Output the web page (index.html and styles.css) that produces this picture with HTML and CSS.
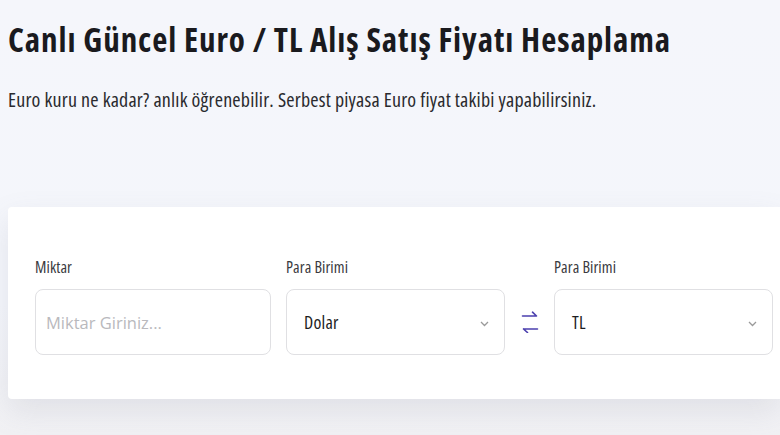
FILE: index.html
```html
<!DOCTYPE html>
<html lang="tr">
<head>
<meta charset="utf-8">
<title>Euro / TL Hesaplama</title>
<link rel="stylesheet" href="styles.css">
</head>
<body>
<main class="page">
  <header class="intro">
    <h1 class="title">Canlı Güncel Euro / TL Alış Satış Fiyatı Hesaplama</h1>
    <p class="lead">Euro kuru ne kadar? anlık öğrenebilir. Serbest piyasa Euro fiyat takibi yapabilirsiniz.</p>
  </header>
  <section class="card">
    <div class="field field-amount">
      <label class="label">Miktar</label>
      <div class="box"><span class="placeholder">Miktar Giriniz...</span></div>
    </div>
    <div class="field field-cur">
      <label class="label">Para Birimi</label>
      <div class="box select"><span class="value">Dolar</span>
        <svg class="chev" width="9" height="6" viewBox="0 0 9 6"><path d="M1 1l3.5 3.5L8 1" fill="none" stroke="#9a9a9a" stroke-width="1.3"/></svg>
      </div>
    </div>
    <div class="swap">
      <svg width="18" height="22" viewBox="0 0 18 22"><g fill="none" stroke="#4b3fae" stroke-width="1.6" stroke-linecap="round" stroke-linejoin="round"><path d="M1.5 5h14M11.5 1.2l4 3.8"/><path d="M16.5 18h-14M6.5 21.5l-4-3.5"/></g></svg>
    </div>
    <div class="field field-cur">
      <label class="label">Para Birimi</label>
      <div class="box select"><span class="value">TL</span>
        <svg class="chev" width="9" height="6" viewBox="0 0 9 6"><path d="M1 1l3.5 3.5L8 1" fill="none" stroke="#9a9a9a" stroke-width="1.3"/></svg>
      </div>
    </div>
  </section>
</main>
</body>
</html>
```
FILE: styles.css
```css
html, body {
  margin: 0;
  padding: 0;
}
body {
  width: 780px;
  height: 435px;
  overflow: hidden;
  font-family: "Open Sans", "Liberation Sans", sans-serif;
  background: linear-gradient(180deg, #f5f6fb 0%, #f4f6fb 70%, #f1f1f4 100%);
  color: #1b1b1f;
}
.page {
  padding: 0 0 0 8px;
}
.intro {
  padding-top: 20px;
}
.title {
  margin: 0;
  font-size: 33px;
  line-height: 40px;
  font-weight: 700;
  font-stretch: 75%;
  letter-spacing: 0.93px;
  color: #1a1a1e;
  white-space: nowrap;
}
.lead {
  margin: 28px 0 0;
  font-size: 20px;
  line-height: 24px;
  font-weight: 400;
  font-stretch: 75%;
  letter-spacing: 0.2px;
  color: #2a2a2e;
  white-space: nowrap;
}
.card {
  margin-top: 95px;
  background: #fff;
  height: 192px;
  box-sizing: border-box;
  padding: 50px 0 0 27px;
  display: flex;
  align-items: flex-start;
  box-shadow: 0 12px 30px rgba(120, 120, 140, 0.15);
  border-radius: 4px 0 0 4px;
}
.field {
  display: flex;
  flex-direction: column;
}
.field-amount { width: 236px; margin-right: 15px; }
.field-cur { width: 219px; }
.label {
  font-size: 16px;
  line-height: 20px;
  font-stretch: 75%;
  letter-spacing: 0.1px;
  color: #3a3a3e;
  margin-bottom: 12px;
}
.box {
  height: 66px;
  box-sizing: border-box;
  border: 1px solid #e0e0e3;
  border-radius: 8px;
  display: flex;
  align-items: center;
  padding: 0 15px 0 10px;
  background: #fff;
}
.select {
  padding-left: 17px;
  justify-content: space-between;
}
.placeholder {
  font-size: 16.5px;
  color: #b9b9bd;
}
.value {
  font-size: 18px;
  font-stretch: 75%;
  letter-spacing: 0.2px;
  color: #1d1d22;
}
.chev { margin-top: 4px; }
.swap {
  width: 49px;
  height: 66px;
  margin-top: 32px;
  display: flex;
  align-items: center;
  justify-content: center;
}
```
